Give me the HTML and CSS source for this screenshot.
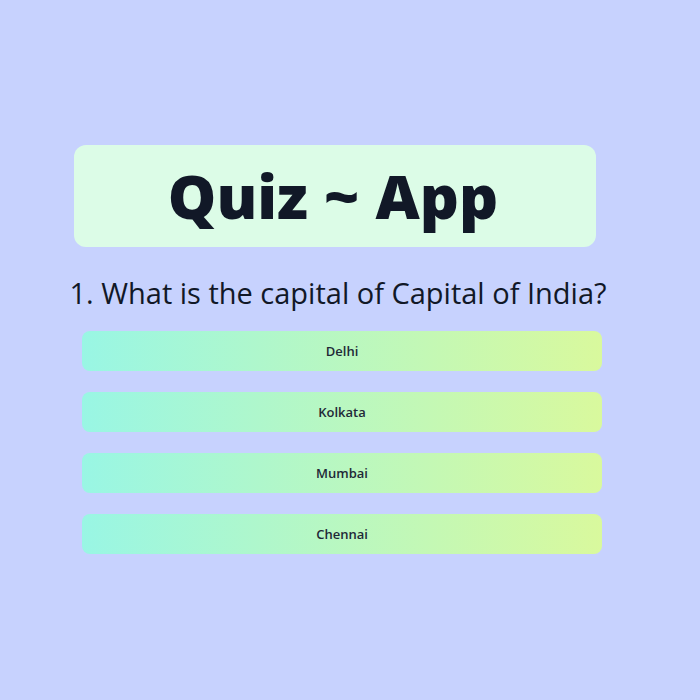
FILE: index.html
```html
<!DOCTYPE html>
<html lang="en">
<head>
<meta charset="utf-8">
<title>Quiz ~ App</title>
<link rel="stylesheet" href="styles.css">
</head>
<body>
<main class="page">
  <div class="quiz">
    <header class="title-box">
      <h1 class="title">Quiz ~ App</h1>
    </header>
    <h2 class="question">1. What is the capital of Capital of India?</h2>
    <div class="options">
      <button class="option">Delhi</button>
      <button class="option">Kolkata</button>
      <button class="option">Mumbai</button>
      <button class="option">Chennai</button>
    </div>
  </div>
</main>
</body>
</html>
```
FILE: styles.css
```css
* { box-sizing: border-box; }
html, body { margin: 0; padding: 0; }
body {
  background: #c7d2fe;
  font-family: "Open Sans", "Noto Sans", sans-serif;
  color: #111827;
}
.page {
  height: 700px;
  display: flex;
  align-items: center;
  justify-content: center;
}
.quiz {
  width: 528px;
  display: flex;
  flex-direction: column;
  margin-left: -24px;
  margin-top: -2px;
}
.title-box {
  width: 522px;
  height: 102px;
  background: #dcfce7;
  border-radius: 12px;
  display: flex;
  align-items: center;
  justify-content: center;
}
.title {
  margin: 0 4px 0 0;
  font-size: 61px;
  font-weight: 800;
  line-height: 1;
  color: #111827;
}
.question {
  align-self: center;
  margin: 26px 0 0 0;
  font-size: 29px;
  font-weight: 400;
  line-height: 40px;
  white-space: nowrap;
  color: #111827;
}
.options {
  margin-top: 18px;
  margin-left: 8px;
  display: flex;
  flex-direction: column;
  gap: 21px;
}
.option {
  width: 520px;
  height: 40px;
  border: none;
  border-radius: 8px;
  background: linear-gradient(to right, #99f6e4, #d9f99d);
  font-family: "Open Sans", "Noto Sans", sans-serif;
  font-size: 13px;
  font-weight: 600;
  color: #1f2937;
  cursor: pointer;
}
```
